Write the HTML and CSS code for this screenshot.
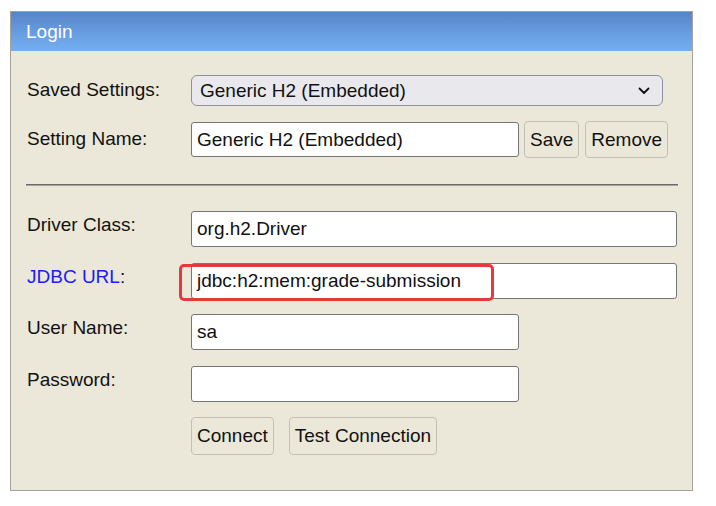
FILE: index.html
```html
<!DOCTYPE html>
<html>
<head>
<meta charset="utf-8">
<link rel="stylesheet" href="styles.css">
</head>
<body>
<div class="panel">
  <div class="head">Login</div>
  <div class="body">
    <div class="row r-saved">
      <div class="label">Saved Settings:</div>
      <div class="select">
        <span>Generic H2 (Embedded)</span>
        <svg class="chev" width="12" height="8" viewBox="0 0 12 8"><path d="M1.5 1.5 L6 6 L10.5 1.5" fill="none" stroke="#111" stroke-width="1.8" stroke-linecap="round" stroke-linejoin="round"/></svg>
      </div>
    </div>
    <div class="row r-name">
      <div class="label">Setting Name:</div>
      <div class="input short">Generic H2 (Embedded)</div>
      <div class="btn save">Save</div>
      <div class="btn">Remove</div>
    </div>
    <div class="rule"></div>
    <div class="fields">
      <div class="row">
        <div class="label">Driver Class:</div>
        <div class="input wide">org.h2.Driver</div>
      </div>
      <div class="row">
        <div class="label"><span class="link">JDBC URL</span>:</div>
        <div class="input wide hl">jdbc:h2:mem:grade-submission<div class="mark"></div></div>
      </div>
      <div class="row">
        <div class="label">User Name:</div>
        <div class="input short">sa</div>
      </div>
      <div class="row">
        <div class="label">Password:</div>
        <div class="input short"></div>
      </div>
      <div class="row r-btns">
        <div class="label"></div>
        <div class="btn tall">Connect</div>
        <div class="btn tall test">Test Connection</div>
      </div>
    </div>
  </div>
</div>
</body>
</html>
```
FILE: styles.css
```css
* { box-sizing: border-box; }
html, body { margin: 0; background: #ffffff; }
body {
  padding: 11px 0 0 10px;
  font-family: "Liberation Sans", Arial, sans-serif;
  font-size: 19px;
  color: #111;
}
.panel {
  width: 683px;
  height: 480px;
  border: 1px solid #a5a394;
  background: #ece8d9;
}
.head {
  height: 39px;
  background: linear-gradient(to bottom, #5884c8 0%, #69a0e4 60%, #76aef2 100%);
  color: #fff;
  padding: 9px 0 0 15px;
  line-height: 22px;
}
.body {
  padding: 24px 14px 0 16px;
}
.row {
  display: flex;
  align-items: flex-start;
}
.label {
  width: 164px;
  flex: none;
  line-height: 22px;
  padding-top: 3px;
}
.link { color: #1a1aff; }
.select {
  width: 472px;
  height: 31px;
  border: 1px solid #8f8f9d;
  border-radius: 6px;
  background: #e9e9ed;
  display: flex;
  align-items: center;
  justify-content: space-between;
  padding: 0 12px 0 8px;
  line-height: 22px;
}
.chev { display: block; }
.r-saved .label { padding-top: 4px; }
.r-name {
  margin-top: 15px;
  align-items: center;
}
.r-name .label { align-self: flex-start; padding-top: 7px; }
.input {
  height: 36px;
  border: 1px solid #767676;
  border-radius: 3px;
  background: #fff;
  padding: 0 5px;
  line-height: 34px;
  position: relative;
  white-space: nowrap;
}
.r-name .input { height: 35px; line-height: 33px; }
.short { width: 328px; }
.wide { width: 486px; }
.btn {
  height: 37px;
  border: 1px solid #c3bfb2;
  border-radius: 4px;
  background: #ece8d9;
  padding: 0 5px;
  line-height: 35px;
  white-space: nowrap;
}
.save { margin: 0 6px 0 5px; }
.rule {
  margin: 26px 0 0 -1px;
  height: 2px;
  border-top: 1px solid #6a6a6a;
  border-bottom: 1px solid #a8a69c;
}
.fields {
  margin-top: 25px;
  display: flex;
  flex-direction: column;
  gap: 15.5px;
}
.r-btns .btn { height: 38px; line-height: 36px; }
.test { margin-left: 15px; }
.mark {
  position: absolute;
  left: -13px;
  top: 0;
  width: 315px;
  height: 37px;
  border: 3px solid #e53a3c;
  border-radius: 5px;
}
```
